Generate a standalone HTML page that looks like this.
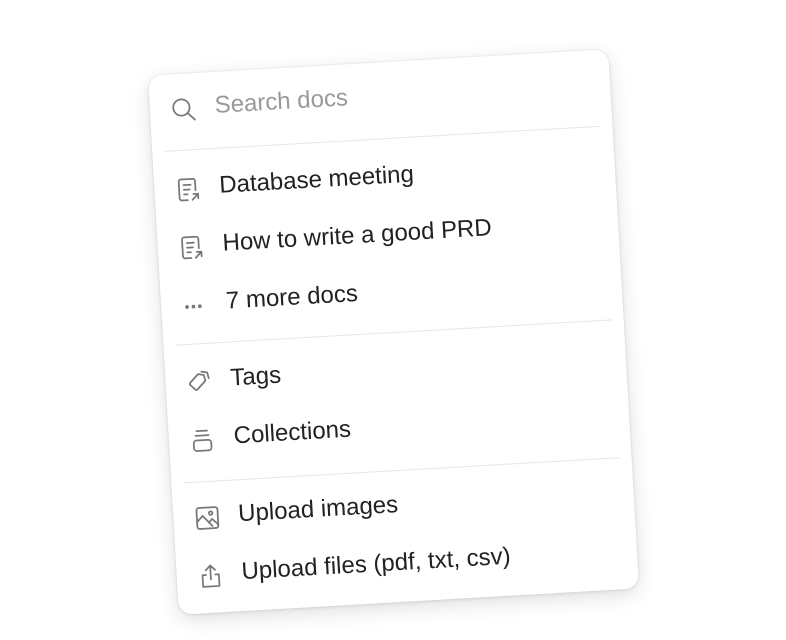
<!DOCTYPE html>
<html><head><meta charset="utf-8"><style>
html,body{margin:0;padding:0;background:#fff;width:786px;height:640px;overflow:hidden}
.card{position:absolute;left:162.5px;top:62px;width:461px;height:540px;background:#fff;border-radius:14px;
transform:rotate(-3.3deg);transform-origin:50% 50%;
box-shadow:0 0 0 1px rgba(0,0,0,0.03),0 6px 20px rgba(0,0,0,0.12),0 1px 4px rgba(0,0,0,0.08);
font-family:"Liberation Sans",sans-serif;}
.it{position:absolute;left:0;right:0;height:40px}
.it svg{position:absolute;left:20px;top:6px;width:28px;height:28px;fill:none;stroke:#777;stroke-width:1.5;stroke-linecap:round;stroke-linejoin:round}
.it span{position:absolute;left:65px;top:4px;font-size:24px;line-height:28px;color:#222;white-space:nowrap}
.hr{position:absolute;left:12px;right:12px;height:1px;background:#e6e6e6}
</style></head><body>
<div class="card">
 <div class="it" style="top:16px"><svg viewBox="0 0 24 24"><circle cx="10" cy="10" r="7"/><path d="M15 15l6 6"/></svg><span style="color:#999">Search docs</span></div>
 <div class="hr" style="top:76px"></div>
 <div class="it" style="top:96px"><svg viewBox="0 0 24 24"><path d="M11 21H6a2 2 0 0 1-2-2V5a2 2 0 0 1 2-2h10a2 2 0 0 1 2 2v8M8 8h6M8 12h5M8 16h3M15 21l5-5M16 16h4v4"/></svg><span>Database meeting</span></div>
 <div class="it" style="top:154px"><svg viewBox="0 0 24 24"><path d="M11 21H6a2 2 0 0 1-2-2V5a2 2 0 0 1 2-2h10a2 2 0 0 1 2 2v8M8 8h6M8 12h5M8 16h3M15 21l5-5M16 16h4v4"/></svg><span>How to write a good PRD</span></div>
 <div class="it" style="top:212px"><svg viewBox="0 0 24 24" style="stroke:none;fill:#777"><circle cx="5" cy="13" r="1.6"/><circle cx="10.5" cy="13" r="1.6"/><circle cx="16" cy="13" r="1.6"/></svg><span>7 more docs</span></div>
 <div class="hr" style="top:270px"></div>
 <div class="it" style="top:289px"><svg viewBox="0 0 24 24"><path d="M4 12l7-7 5 1 1 5-7 7a1.5 1.5 0 0 1-2 0l-4-4a1.5 1.5 0 0 1 0-2zM14 3l5 1 1 5"/></svg><span>Tags</span></div>
 <div class="it" style="top:347px"><svg viewBox="0 0 24 24"><rect x="4" y="12" width="15" height="9" rx="2.5"/><path d="M6 8h11M7 4h9"/></svg><span>Collections</span></div>
 <div class="hr" style="top:408px"></div>
 <div class="it" style="top:425px"><svg viewBox="0 0 24 24"><rect x="3" y="3" width="18" height="18" rx="2"/><circle cx="15" cy="8" r="1.5"/><path d="M3 15l5-5 8 9M13 16l3-3 5 5"/></svg><span>Upload images</span></div>
 <div class="it" style="top:483px"><svg viewBox="0 0 24 24"><path d="M8 11H5v10h14V11h-3M12 15V3M8 7l4-4 4 4"/></svg><span>Upload files (pdf, txt, csv)</span></div>
</div>
</body></html>
